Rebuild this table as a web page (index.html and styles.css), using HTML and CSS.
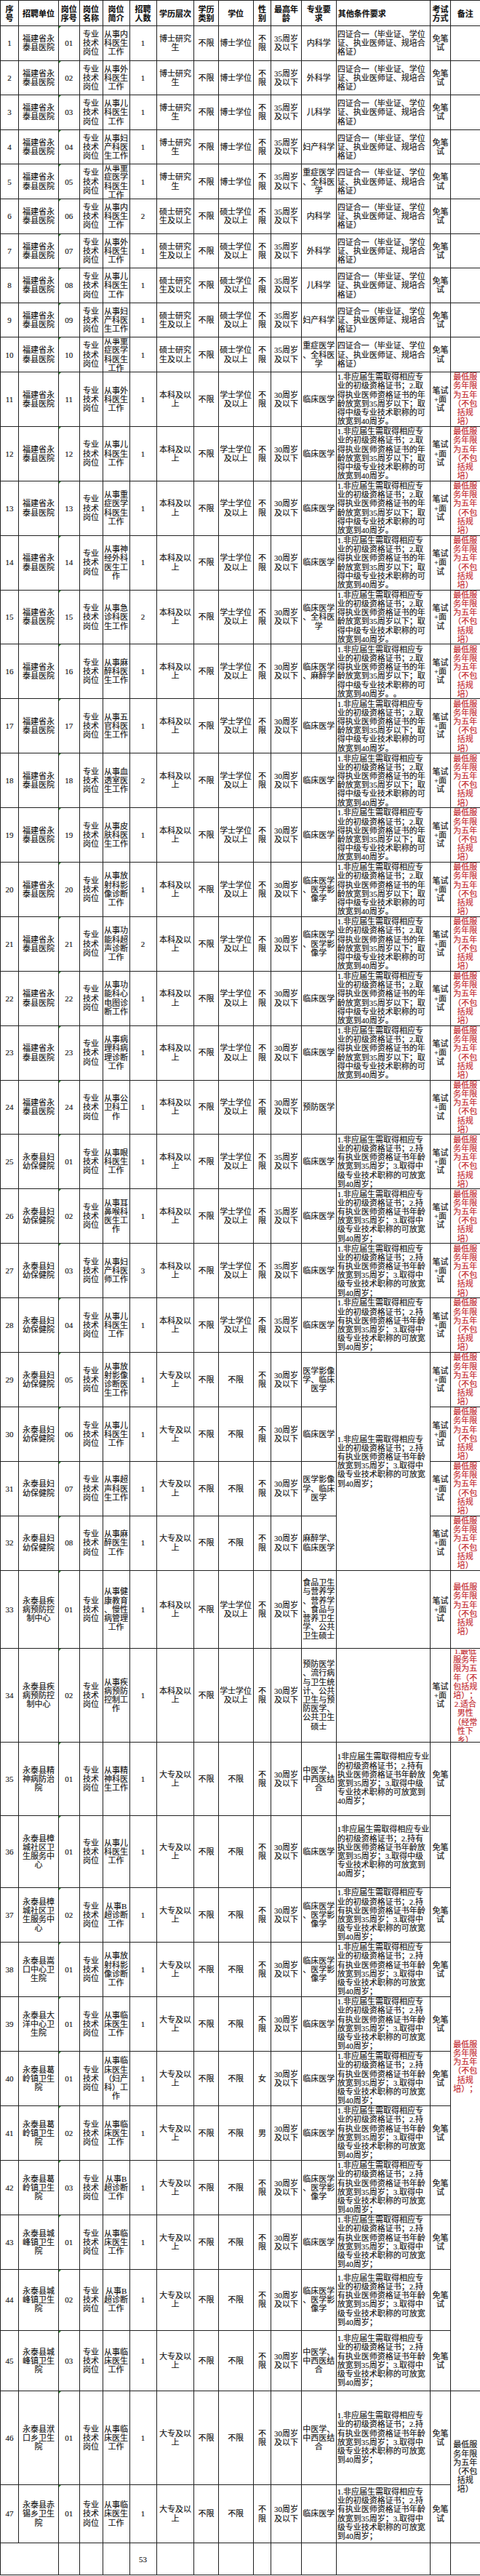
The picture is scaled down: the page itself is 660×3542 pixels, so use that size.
FILE: index.html
```html
<!DOCTYPE html>
<html lang="zh-CN">
<head>
<meta charset="utf-8">
<title>招聘岗位表</title>
<link rel="stylesheet" href="styles.css">
</head>
<body>
<table class="sheet">
<colgroup>
<col class="c1"><col class="c2"><col class="c3"><col class="c4"><col class="c5"><col class="c6"><col class="c7"><col class="c8"><col class="c9"><col class="c10"><col class="c11"><col class="c12"><col class="c13"><col class="c14"><col class="c15">
</colgroup>
<thead>
<tr class="h"><th>序号</th><th>招聘单位</th><th>岗位序号</th><th>岗位名称</th><th>岗位简介</th><th>招聘人数</th><th>学历层次</th><th>学历类别</th><th>学位</th><th>性别</th><th>最高年龄</th><th>专业要求</th><th class="l">其他条件要求</th><th>考试方式</th><th>备注</th></tr>
</thead>
<tbody>
<tr class="ra"><td>1</td><td>福建省永泰县医院</td><td class="code">01</td><td>专业技术岗位</td><td class="m">从事内科医生工作</td><td>1</td><td>博士研究生</td><td>不限</td><td>博士学位</td><td>不限</td><td>35周岁及以下</td><td class="m">内科学</td><td class="l">四证合一（毕业证、学位证、执业医师证、规培合格证）</td><td>免笔试</td><td></td></tr>
<tr class="ra"><td>2</td><td>福建省永泰县医院</td><td class="code">02</td><td>专业技术岗位</td><td class="m">从事外科医生工作</td><td>1</td><td>博士研究生</td><td>不限</td><td>博士学位</td><td>不限</td><td>35周岁及以下</td><td class="m">外科学</td><td class="l">四证合一（毕业证、学位证、执业医师证、规培合格证）</td><td>免笔试</td><td></td></tr>
<tr class="ra"><td>3</td><td>福建省永泰县医院</td><td class="code">03</td><td>专业技术岗位</td><td class="m">从事儿科医生工作</td><td>1</td><td>博士研究生</td><td>不限</td><td>博士学位</td><td>不限</td><td>35周岁及以下</td><td class="m">儿科学</td><td class="l">四证合一（毕业证、学位证、执业医师证、规培合格证）</td><td>免笔试</td><td></td></tr>
<tr class="ra"><td>4</td><td>福建省永泰县医院</td><td class="code">04</td><td>专业技术岗位</td><td class="m">从事妇产科医生工作</td><td>1</td><td>博士研究生</td><td>不限</td><td>博士学位</td><td>不限</td><td>35周岁及以下</td><td class="m">妇产科学</td><td class="l">四证合一（毕业证、学位证、执业医师证、规培合格证）</td><td>免笔试</td><td></td></tr>
<tr class="ra"><td>5</td><td>福建省永泰县医院</td><td class="code">05</td><td>专业技术岗位</td><td class="m"><div class="clip clip-s">从事重症医学科医生工作</div></td><td>1</td><td>博士研究生</td><td>不限</td><td>博士学位</td><td>不限</td><td>35周岁及以下</td><td class="m">重症医学、全科医学</td><td class="l">四证合一（毕业证、学位证、执业医师证、规培合格证）</td><td>免笔试</td><td></td></tr>
<tr class="ra"><td>6</td><td>福建省永泰县医院</td><td class="code">06</td><td>专业技术岗位</td><td class="m">从事内科医生工作</td><td>2</td><td>硕士研究生及以上</td><td>不限</td><td>硕士学位及以上</td><td>不限</td><td>35周岁及以下</td><td class="m">内科学</td><td class="l">四证合一（毕业证、学位证、执业医师证、规培合格证）</td><td>免笔试</td><td></td></tr>
<tr class="ra"><td>7</td><td>福建省永泰县医院</td><td class="code">07</td><td>专业技术岗位</td><td class="m">从事外科医生工作</td><td>1</td><td>硕士研究生及以上</td><td>不限</td><td>硕士学位及以上</td><td>不限</td><td>35周岁及以下</td><td class="m">外科学</td><td class="l">四证合一（毕业证、学位证、执业医师证、规培合格证）</td><td>免笔试</td><td></td></tr>
<tr class="ra"><td>8</td><td>福建省永泰县医院</td><td class="code">08</td><td>专业技术岗位</td><td class="m">从事儿科医生工作</td><td>1</td><td>硕士研究生及以上</td><td>不限</td><td>硕士学位及以上</td><td>不限</td><td>35周岁及以下</td><td class="m">儿科学</td><td class="l">四证合一（毕业证、学位证、执业医师证、规培合格证）</td><td>免笔试</td><td></td></tr>
<tr class="ra"><td>9</td><td>福建省永泰县医院</td><td class="code">09</td><td>专业技术岗位</td><td class="m">从事妇产科医生工作</td><td>1</td><td>硕士研究生及以上</td><td>不限</td><td>硕士学位及以上</td><td>不限</td><td>35周岁及以下</td><td class="m">妇产科学</td><td class="l">四证合一（毕业证、学位证、执业医师证、规培合格证）</td><td>免笔试</td><td></td></tr>
<tr class="ra"><td>10</td><td>福建省永泰县医院</td><td class="code">10</td><td>专业技术岗位</td><td class="m"><div class="clip clip-s">从事重症医学科医生工作</div></td><td>1</td><td>硕士研究生及以上</td><td>不限</td><td>硕士学位及以上</td><td>不限</td><td>35周岁及以下</td><td class="m">重症医学、全科医学</td><td class="l">四证合一（毕业证、学位证、执业医师证、规培合格证）</td><td>免笔试</td><td></td></tr>
<tr class="rb"><td>11</td><td>福建省永泰县医院</td><td class="code">11</td><td>专业技术岗位</td><td class="m">从事外科医生工作</td><td>1</td><td>本科及以上</td><td>不限</td><td>学士学位及以上</td><td>不限</td><td>30周岁及以下</td><td class="m">临床医学</td><td class="l">1.非应届生需取得相应专业的初级资格证书；2.取得执业医师资格证书的年龄放宽到35周岁以下；取得中级专业技术职称的可放宽到40周岁。</td><td>笔试+面试</td><td class="red">最低服务年限为五年（不包括规培）</td></tr>
<tr class="rb"><td>12</td><td>福建省永泰县医院</td><td class="code">12</td><td>专业技术岗位</td><td class="m">从事儿科医生工作</td><td>1</td><td>本科及以上</td><td>不限</td><td>学士学位及以上</td><td>不限</td><td>30周岁及以下</td><td class="m">临床医学</td><td class="l">1.非应届生需取得相应专业的初级资格证书；2.取得执业医师资格证书的年龄放宽到35周岁以下；取得中级专业技术职称的可放宽到40周岁。</td><td>笔试+面试</td><td class="red">最低服务年限为五年（不包括规培）</td></tr>
<tr class="rb"><td>13</td><td>福建省永泰县医院</td><td class="code">13</td><td>专业技术岗位</td><td class="m">从事重症医学科医生工作</td><td>1</td><td>本科及以上</td><td>不限</td><td>学士学位及以上</td><td>不限</td><td>30周岁及以下</td><td class="m">临床医学</td><td class="l">1.非应届生需取得相应专业的初级资格证书；2.取得执业医师资格证书的年龄放宽到35周岁以下；取得中级专业技术职称的可放宽到40周岁。</td><td>笔试+面试</td><td class="red">最低服务年限为五年（不包括规培）</td></tr>
<tr class="rb"><td>14</td><td>福建省永泰县医院</td><td class="code">14</td><td>专业技术岗位</td><td class="m">从事神经外科医生工作</td><td>1</td><td>本科及以上</td><td>不限</td><td>学士学位及以上</td><td>不限</td><td>30周岁及以下</td><td class="m">临床医学</td><td class="l">1.非应届生需取得相应专业的初级资格证书；2.取得执业医师资格证书的年龄放宽到35周岁以下；取得中级专业技术职称的可放宽到40周岁。</td><td>笔试+面试</td><td class="red">最低服务年限为五年（不包括规培）</td></tr>
<tr class="rb"><td>15</td><td>福建省永泰县医院</td><td class="code">15</td><td>专业技术岗位</td><td class="m">从事急诊科医生工作</td><td>2</td><td>本科及以上</td><td>不限</td><td>学士学位及以上</td><td>不限</td><td>30周岁及以下</td><td class="m">临床医学、全科医学</td><td class="l">1.非应届生需取得相应专业的初级资格证书；2.取得执业医师资格证书的年龄放宽到35周岁以下；取得中级专业技术职称的可放宽到40周岁。</td><td>笔试+面试</td><td class="red">最低服务年限为五年（不包括规培）</td></tr>
<tr class="rb"><td>16</td><td>福建省永泰县医院</td><td class="code">16</td><td>专业技术岗位</td><td class="m">从事麻醉科医生工作</td><td>1</td><td>本科及以上</td><td>不限</td><td>学士学位及以上</td><td>不限</td><td>30周岁及以下</td><td class="m">临床医学、麻醉学</td><td class="l">1.非应届生需取得相应专业的初级资格证书；2.取得执业医师资格证书的年龄放宽到35周岁以下；取得中级专业技术职称的可放宽到40周岁。。</td><td>笔试+面试</td><td class="red">最低服务年限为五年（不包括规培）</td></tr>
<tr class="rb"><td>17</td><td>福建省永泰县医院</td><td class="code">17</td><td>专业技术岗位</td><td class="m">从事五官科医生工作</td><td>1</td><td>本科及以上</td><td>不限</td><td>学士学位及以上</td><td>不限</td><td>30周岁及以下</td><td class="m">临床医学</td><td class="l">1.非应届生需取得相应专业的初级资格证书；2.取得执业医师资格证书的年龄放宽到35周岁以下；取得中级专业技术职称的可放宽到40周岁。</td><td>笔试+面试</td><td class="red">最低服务年限为五年（不包括规培）</td></tr>
<tr class="rb"><td>18</td><td>福建省永泰县医院</td><td class="code">18</td><td>专业技术岗位</td><td class="m">从事血透室医生工作</td><td>2</td><td>本科及以上</td><td>不限</td><td>学士学位及以上</td><td>不限</td><td>30周岁及以下</td><td class="m">临床医学</td><td class="l">1.非应届生需取得相应专业的初级资格证书；2.取得执业医师资格证书的年龄放宽到35周岁以下；取得中级专业技术职称的可放宽到40周岁。</td><td>笔试+面试</td><td class="red">最低服务年限为五年（不包括规培）</td></tr>
<tr class="rb"><td>19</td><td>福建省永泰县医院</td><td class="code">19</td><td>专业技术岗位</td><td class="m">从事皮肤科医生工作</td><td>1</td><td>本科及以上</td><td>不限</td><td>学士学位及以上</td><td>不限</td><td>30周岁及以下</td><td class="m">临床医学</td><td class="l">1.非应届生需取得相应专业的初级资格证书；2.取得执业医师资格证书的年龄放宽到35周岁以下；取得中级专业技术职称的可放宽到40周岁。</td><td>笔试+面试</td><td class="red">最低服务年限为五年（不包括规培）</td></tr>
<tr class="rb"><td>20</td><td>福建省永泰县医院</td><td class="code">20</td><td>专业技术岗位</td><td class="m">从事放射科影像诊断工作</td><td>1</td><td>本科及以上</td><td>不限</td><td>学士学位及以上</td><td>不限</td><td>30周岁及以下</td><td class="m">临床医学、医学影像学</td><td class="l">1.非应届生需取得相应专业的初级资格证书；2.取得执业医师资格证书的年龄放宽到35周岁以下；取得中级专业技术职称的可放宽到40周岁。</td><td>笔试+面试</td><td class="red">最低服务年限为五年（不包括规培）</td></tr>
<tr class="rb"><td>21</td><td>福建省永泰县医院</td><td class="code">21</td><td>专业技术岗位</td><td class="m">从事功能科超声诊断工作</td><td>2</td><td>本科及以上</td><td>不限</td><td>学士学位及以上</td><td>不限</td><td>30周岁及以下</td><td class="m">临床医学、医学影像学</td><td class="l">1.非应届生需取得相应专业的初级资格证书；2.取得执业医师资格证书的年龄放宽到35周岁以下；取得中级专业技术职称的可放宽到40周岁。</td><td>笔试+面试</td><td class="red">最低服务年限为五年（不包括规培）</td></tr>
<tr class="rb"><td>22</td><td>福建省永泰县医院</td><td class="code">22</td><td>专业技术岗位</td><td class="m">从事功能科心电图诊断工作</td><td>1</td><td>本科及以上</td><td>不限</td><td>学士学位及以上</td><td>不限</td><td>30周岁及以下</td><td class="m">临床医学</td><td class="l">1.非应届生需取得相应专业的初级资格证书；2.取得执业医师资格证书的年龄放宽到35周岁以下；取得中级专业技术职称的可放宽到40周岁。</td><td>笔试+面试</td><td class="red">最低服务年限为五年（不包括规培）</td></tr>
<tr class="rb"><td>23</td><td>福建省永泰县医院</td><td class="code">23</td><td>专业技术岗位</td><td class="m">从事病理科病理诊断工作</td><td>1</td><td>本科及以上</td><td>不限</td><td>学士学位及以上</td><td>不限</td><td>30周岁及以下</td><td class="m">临床医学</td><td class="l">1.非应届生需取得相应专业的初级资格证书；2.取得执业医师资格证书的年龄放宽到35周岁以下；取得中级专业技术职称的可放宽到40周岁。</td><td>笔试+面试</td><td class="red">最低服务年限为五年（不包括规培）</td></tr>
<tr class="rb"><td>24</td><td>福建省永泰县医院</td><td class="code">24</td><td>专业技术岗位</td><td class="m">从事公卫科工作</td><td>1</td><td>本科及以上</td><td>不限</td><td>学士学位及以上</td><td>不限</td><td>30周岁及以下</td><td class="m">预防医学</td><td class="l"></td><td>笔试+面试</td><td class="red">最低服务年限为五年（不包括规培）</td></tr>
<tr class="rb"><td>25</td><td>永泰县妇幼保健院</td><td class="code">01</td><td>专业技术岗位</td><td class="m">从事眼科医生工作</td><td>1</td><td>本科及以上</td><td>不限</td><td>学士学位及以上</td><td>不限</td><td>35周岁及以下</td><td class="m">临床医学</td><td class="l">1.非应届生需取得相应专业的初级资格证书；2.持有执业医师资格证书年龄放宽到35周岁；3.取得中级专业技术职称的可放宽到40周岁；</td><td>笔试+面试</td><td class="red">最低服务年限为五年（不包括规培）</td></tr>
<tr class="rb"><td>26</td><td>永泰县妇幼保健院</td><td class="code">02</td><td>专业技术岗位</td><td class="m">从事耳鼻喉科医生工作</td><td>1</td><td>本科及以上</td><td>不限</td><td>学士学位及以上</td><td>不限</td><td>35周岁及以下</td><td class="m">临床医学</td><td class="l">1.非应届生需取得相应专业的初级资格证书；2.持有执业医师资格证书年龄放宽到35周岁；3.取得中级专业技术职称的可放宽到40周岁；</td><td>笔试+面试</td><td class="red">最低服务年限为五年（不包括规培）</td></tr>
<tr class="rb"><td>27</td><td>永泰县妇幼保健院</td><td class="code">03</td><td>专业技术岗位</td><td class="m">从事妇产科医师工作</td><td>3</td><td>本科及以上</td><td>不限</td><td>学士学位及以上</td><td>不限</td><td>35周岁及以下</td><td class="m">临床医学</td><td class="l">1.非应届生需取得相应专业的初级资格证书；2.持有执业医师资格证书年龄放宽到35周岁；3.取得中级专业技术职称的可放宽到40周岁；</td><td>笔试+面试</td><td class="red">最低服务年限为五年（不包括规培）</td></tr>
<tr class="rb"><td>28</td><td>永泰县妇幼保健院</td><td class="code">04</td><td>专业技术岗位</td><td class="m">从事儿科医生工作</td><td>1</td><td>本科及以上</td><td>不限</td><td>学士学位及以上</td><td>不限</td><td>35周岁及以下</td><td class="m">临床医学</td><td class="l">1.非应届生需取得相应专业的初级资格证书；2.持有执业医师资格证书年龄放宽到35周岁；3.取得中级专业技术职称的可放宽到40周岁；</td><td>笔试+面试</td><td class="red">最低服务年限为五年（不包括规培）</td></tr>
<tr class="rb"><td>29</td><td>永泰县妇幼保健院</td><td class="code">05</td><td>专业技术岗位</td><td class="m">从事放射影像诊断医生工作</td><td>1</td><td>大专及以上</td><td>不限</td><td>不限</td><td>不限</td><td>30周岁及以下</td><td class="m">医学影像学、临床医学</td><td class="l" rowspan="4">1.非应届生需取得相应专业的初级资格证书；2.持有执业医师资格证书年龄放宽到35周岁；3.取得中级专业技术职称的可放宽到40周岁；</td><td>笔试+面试</td><td class="red">最低服务年限为五年（不包括规培）</td></tr>
<tr class="rb"><td>30</td><td>永泰县妇幼保健院</td><td class="code">06</td><td>专业技术岗位</td><td class="m">从事儿科医生工作</td><td>1</td><td>大专及以上</td><td>不限</td><td>不限</td><td>不限</td><td>30周岁及以下</td><td class="m">临床医学</td><td>笔试+面试</td><td class="red">最低服务年限为五年（不包括规培）</td></tr>
<tr class="rb"><td>31</td><td>永泰县妇幼保健院</td><td class="code">07</td><td>专业技术岗位</td><td class="m">从事超声科医生工作</td><td>1</td><td>大专及以上</td><td>不限</td><td>不限</td><td>不限</td><td>30周岁及以下</td><td class="m">医学影像学、临床医学</td><td>笔试+面试</td><td class="red">最低服务年限为五年（不包括规培）</td></tr>
<tr class="rb"><td>32</td><td>永泰县妇幼保健院</td><td class="code">08</td><td>专业技术岗位</td><td class="m">从事麻醉医生工作</td><td>1</td><td>大专及以上</td><td>不限</td><td>不限</td><td>不限</td><td>30周岁及以下</td><td class="m">麻醉学、临床医学</td><td>笔试+面试</td><td class="red">最低服务年限为五年（不包括规培）</td></tr>
<tr class="r33"><td>33</td><td>永泰县疾病预防控制中心</td><td class="code">01</td><td>专业技术岗位</td><td class="m">从事健康教育、慢性病管理工作</td><td>1</td><td>本科及以上</td><td>不限</td><td>学士学位及以上</td><td>不限</td><td>30周岁及以下</td><td class="m">食品卫生与营养学、营养学、食品与营养卫生学、公共卫生硕士</td><td class="l"></td><td>笔试+面试</td><td class="red">最低服务年限为五年（不包括规培）</td></tr>
<tr class="r34"><td>34</td><td>永泰县疾病预防控制中心</td><td class="code">02</td><td>专业技术岗位</td><td class="m">从事疾病预防控制工作</td><td>1</td><td>本科及以上</td><td>不限</td><td>学士学位及以上</td><td>不限</td><td>30周岁及以下</td><td class="m">预防医学、流行病与卫生统计、公共卫生与预防医学、公共卫生硕士</td><td class="l"></td><td>笔试+面试</td><td class="red"><div class="clip clip-l">1.最低服务年限为五年（不包括规培）；2.适合男性（经常性下乡）</div></td></tr>
<tr class="r35"><td>35</td><td>永泰县精神病防治院</td><td class="code">01</td><td>专业技术岗位</td><td class="m">从事精神科医生工作</td><td>1</td><td>大专及以上</td><td>不限</td><td>不限</td><td>不限</td><td>30周岁及以下</td><td class="m">中医学、中西医结合</td><td class="l">1非应届生需取得相应专业的初级资格证书；2.持有执业医师资格证书年龄放宽到35周岁；3.取得中级专业技术职称的可放宽到40周岁；</td><td>免笔试</td><td class="red" rowspan="11">最低服务年限为五年（不包括规培）；</td></tr>
<tr class="r36"><td>36</td><td>永泰县樟城社区卫生服务中心</td><td class="code">01</td><td>专业技术岗位</td><td class="m">从事儿科医生工作</td><td>1</td><td>大专及以上</td><td>不限</td><td>不限</td><td>不限</td><td>30周岁及以下</td><td class="m">临床医学</td><td class="l">1非应届生需取得相应专业的初级资格证书；2.持有执业医师资格证书年龄放宽到35周岁；3.取得中级专业技术职称的可放宽到40周岁；</td><td>免笔试</td></tr>
<tr class="r37"><td>37</td><td>永泰县樟城社区卫生服务中心</td><td class="code">02</td><td>专业技术岗位</td><td class="m">从事B超诊断工作</td><td>1</td><td>大专及以上</td><td>不限</td><td>不限</td><td>不限</td><td>30周岁及以下</td><td class="m">临床医学、医学影像学</td><td class="l">1.非应届生需取得相应专业的初级资格证书；2.持有执业医师资格证书年龄放宽到35周岁；3.取得中级专业技术职称的可放宽到40周岁；</td><td>免笔试</td></tr>
<tr class="rc"><td>38</td><td>永泰县嵩口中心卫生院</td><td class="code">01</td><td>专业技术岗位</td><td class="m">从事放射科影像诊断工作</td><td>1</td><td>大专及以上</td><td>不限</td><td>不限</td><td>不限</td><td>30周岁及以下</td><td class="m">临床医学、医学影像学</td><td class="l">1.非应届生需取得相应专业的初级资格证书；2.持有执业医师资格证书年龄放宽到35周岁；3.取得中级专业技术职称的可放宽到40周岁；</td><td>免笔试</td></tr>
<tr class="rc"><td>39</td><td>永泰县大洋中心卫生院</td><td class="code">01</td><td>专业技术岗位</td><td class="m">从事临床医生工作</td><td>1</td><td>大专及以上</td><td>不限</td><td>不限</td><td>不限</td><td>30周岁及以下</td><td class="m">临床医学</td><td class="l">1.非应届生需取得相应专业的初级资格证书；2.持有执业医师资格证书年龄放宽到35周岁；3.取得中级专业技术职称的可放宽到40周岁；</td><td>免笔试</td></tr>
<tr class="rc"><td>40</td><td>永泰县葛岭镇卫生院</td><td class="code">01</td><td>专业技术岗位</td><td class="m">从事临床医生（妇产科）工作</td><td>1</td><td>大专及以上</td><td>不限</td><td>不限</td><td>女</td><td>30周岁及以下</td><td class="m">临床医学</td><td class="l">1.非应届生需取得相应专业的初级资格证书；2.持有执业医师资格证书年龄放宽到35周岁；3.取得中级专业技术职称的可放宽到40周岁；</td><td>免笔试</td></tr>
<tr class="rc"><td>41</td><td>永泰县葛岭镇卫生院</td><td class="code">02</td><td>专业技术岗位</td><td class="m">从事临床医生工作</td><td>1</td><td>大专及以上</td><td>不限</td><td>不限</td><td>男</td><td>30周岁及以下</td><td class="m">临床医学</td><td class="l">1.非应届生需取得相应专业的初级资格证书；2.持有执业医师资格证书年龄放宽到35周岁；3.取得中级专业技术职称的可放宽到40周岁；</td><td>免笔试</td></tr>
<tr class="rc"><td>42</td><td>永泰县葛岭镇卫生院</td><td class="code">03</td><td>专业技术岗位</td><td class="m">从事B超诊断工作</td><td>1</td><td>大专及以上</td><td>不限</td><td>不限</td><td>不限</td><td>30周岁及以下</td><td class="m">临床医学、医学影像学</td><td class="l">1.非应届生需取得相应专业的初级资格证书；2.持有执业医师资格证书年龄放宽到35周岁；3.取得中级专业技术职称的可放宽到40周岁；</td><td>免笔试</td></tr>
<tr class="rc"><td>43</td><td>永泰县城峰镇卫生院</td><td class="code">01</td><td>专业技术岗位</td><td class="m">从事临床医生工作</td><td>1</td><td>大专及以上</td><td>不限</td><td>不限</td><td>不限</td><td>30周岁及以下</td><td class="m">临床医学</td><td class="l">1.非应届生需取得相应专业的初级资格证书；2.持有执业医师资格证书年龄放宽到35周岁；3.取得中级专业技术职称的可放宽到40周岁；</td><td>免笔试</td></tr>
<tr class="r44"><td>44</td><td>永泰县城峰镇卫生院</td><td class="code">02</td><td>专业技术岗位</td><td class="m">从事B超诊断工作</td><td>1</td><td>大专及以上</td><td>不限</td><td>不限</td><td>不限</td><td>30周岁及以下</td><td class="m">临床医学、医学影像学</td><td class="l">1.非应届生需取得相应专业的初级资格证书；2.持有执业医师资格证书年龄放宽到35周岁；3.取得中级专业技术职称的可放宽到40周岁；</td><td>免笔试</td></tr>
<tr class="r45"><td>45</td><td>永泰县城峰镇卫生院</td><td class="code">03</td><td>专业技术岗位</td><td class="m">从事临床医生工作</td><td>1</td><td>大专及以上</td><td>不限</td><td>不限</td><td>不限</td><td>30周岁及以下</td><td class="m">中医学、中西医结合</td><td class="l">1.非应届生需取得相应专业的初级资格证书；2.持有执业医师资格证书年龄放宽到35周岁；3.取得中级专业技术职称的可放宽到40周岁；</td><td>免笔试</td></tr>
<tr class="r46"><td>46</td><td>永泰县洑口乡卫生院</td><td class="code">01</td><td>专业技术岗位</td><td class="m">从事临床医生工作</td><td>1</td><td>大专及以上</td><td>不限</td><td>不限</td><td>不限</td><td>30周岁及以下</td><td class="m">中医学、中西医结合</td><td class="l">1.非应届生需取得相应专业的初级资格证书；2.持有执业医师资格证书年龄放宽到35周岁；3.取得中级专业技术职称的可放宽到40周岁；</td><td>免笔试</td><td rowspan="2">最低服务年限为五年（不包括规培）</td></tr>
<tr class="r47"><td>47</td><td>永泰县赤锡乡卫生院</td><td class="code">01</td><td>专业技术岗位</td><td class="m">从事临床医生工作</td><td>1</td><td>大专及以上</td><td>不限</td><td>不限</td><td>不限</td><td>30周岁及以下</td><td class="m">临床医学</td><td class="l">1.非应届生需取得相应专业的初级资格证书；2.持有执业医师资格证书年龄放宽到35周岁；3.取得中级专业技术职称的可放宽到40周岁；</td><td>免笔试</td></tr>
<tr class="tot"><td colspan="2"></td><td></td><td></td><td></td><td>53</td><td></td><td></td><td></td><td></td><td></td><td></td><td></td><td></td><td></td></tr>
</tbody>
</table>
</body>
</html>
```
FILE: styles.css
```css
html, body {
  margin: 0;
  padding: 0;
  background: #ffffff;
}

body {
  font-family: "Liberation Serif", "Noto Sans CJK SC", serif;
  color: #141414;
}

.sheet {
  width: 660px;
  border-collapse: collapse;
  table-layout: fixed;
  font-size: 11px;
  line-height: 12.2px;
  text-spacing-trim: space-all;
  -webkit-text-stroke: 0.15px currentColor;
}

.c1 { width: 25px; }
.c2 { width: 55px; }
.c3 { width: 28.6px; }
.c4 { width: 32px; }
.c5 { width: 37px; }
.c6 { width: 37px; }
.c7 { width: 51.8px; }
.c8 { width: 33.3px; }
.c9 { width: 47.9px; }
.c10 { width: 24.9px; }
.c11 { width: 41.2px; }
.c12 { width: 48px; }
.c13 { width: 129.6px; }
.c14 { width: 27.4px; }
.c15 { width: 41.3px; }

.sheet th,
.sheet td {
  border: 1px solid #222222;
  padding: 0 1px;
  text-align: center;
  vertical-align: middle;
  overflow: hidden;
}

.sheet th {
  font-family: "Noto Sans CJK SC", sans-serif;
  font-weight: 700;
  padding: 0 2px;
  line-height: 12px;
  color: #0f0f0f;
}

.sheet .l {
  text-align: left;
}

.sheet .m {
  line-break: anywhere;
}

.sheet .red {
  color: #c3252c;
}

.sheet .code {
  position: relative;
}

.sheet .code::before {
  content: "";
  position: absolute;
  top: 0;
  left: 0;
  border-top: 3px solid #2f8a2f;
  border-right: 3px solid transparent;
}

.clip {
  display: flex;
  flex-direction: column;
  justify-content: center;
  overflow: hidden;
}

.clip-s { height: 46px; }
.clip-l { height: 127px; }

tr.h { height: 35px; }
tr.ra { height: 47.6px; }
tr.rb { height: 74.9px; }
tr.r33 { height: 107.7px; }
tr.r34 { height: 128.7px; }
tr.r35 { height: 101px; }
tr.r36 { height: 99.3px; }
tr.r37 { height: 74.7px; }
tr.rc { height: 75px; }
tr.r44 { height: 84px; }
tr.r45 { height: 83px; }
tr.r46 { height: 129px; }
tr.r47 { height: 80.3px; }
tr.tot { height: 44px; }
```
